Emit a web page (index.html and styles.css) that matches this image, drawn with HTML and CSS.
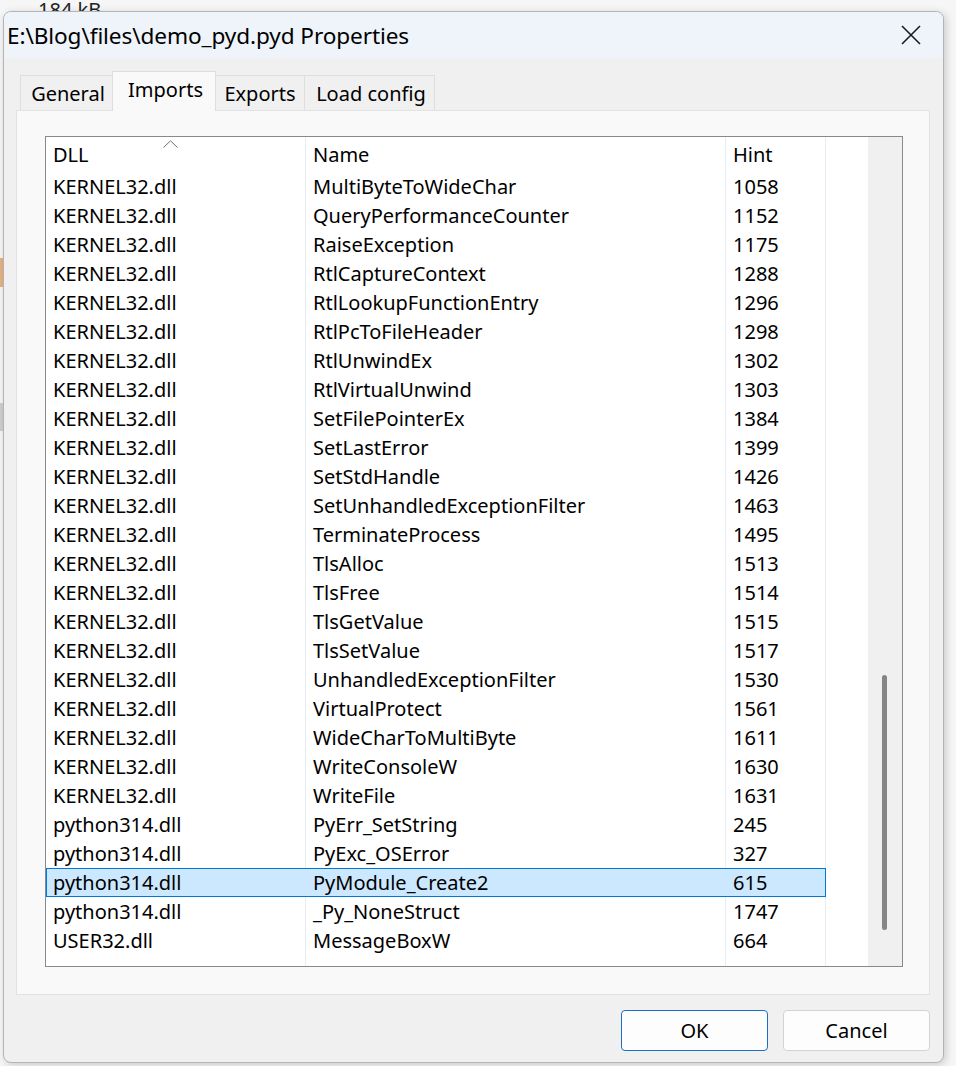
FILE: index.html
```html
<!DOCTYPE html>
<html>
<head>
<meta charset="utf-8">
<link rel="stylesheet" href="styles.css">
</head>
<body>
<div class="desktop">
  <div class="bg-text">184 kB</div>
  <div class="bg-strip orange"></div>
  <div class="bg-strip gray"></div>
  <div class="window">
    <div class="titlebar">
      <span class="title">E:\Blog\files\demo_pyd.pyd Properties</span>
      <svg class="close" width="20" height="20" viewBox="0 0 20 20"><path d="M1 1 L19 19 M19 1 L1 19" stroke="#1b1b1b" stroke-width="1.6" fill="none"/></svg>
    </div>
    <div class="tabs">
      <div class="tab t-general">General</div>
      <div class="tab t-imports active">Imports</div>
      <div class="tab t-exports">Exports</div>
      <div class="tab t-load">Load config</div>
    </div>
    <div class="panel">
      <div class="listview">
        <div class="table">
          <div class="row header">
            <div class="cell">DLL<svg class="sort" width="15" height="8" viewBox="0 0 15 8"><path d="M0.5 7.5 L7.5 0.8 L14.5 7.5" stroke="#707070" stroke-width="1" fill="none"/></svg></div>
            <div class="cell">Name</div>
            <div class="cell">Hint</div>
          </div>
          <div class="row"><div class="cell">KERNEL32.dll</div><div class="cell">MultiByteToWideChar</div><div class="cell">1058</div></div>
          <div class="row"><div class="cell">KERNEL32.dll</div><div class="cell">QueryPerformanceCounter</div><div class="cell">1152</div></div>
          <div class="row"><div class="cell">KERNEL32.dll</div><div class="cell">RaiseException</div><div class="cell">1175</div></div>
          <div class="row"><div class="cell">KERNEL32.dll</div><div class="cell">RtlCaptureContext</div><div class="cell">1288</div></div>
          <div class="row"><div class="cell">KERNEL32.dll</div><div class="cell">RtlLookupFunctionEntry</div><div class="cell">1296</div></div>
          <div class="row"><div class="cell">KERNEL32.dll</div><div class="cell">RtlPcToFileHeader</div><div class="cell">1298</div></div>
          <div class="row"><div class="cell">KERNEL32.dll</div><div class="cell">RtlUnwindEx</div><div class="cell">1302</div></div>
          <div class="row"><div class="cell">KERNEL32.dll</div><div class="cell">RtlVirtualUnwind</div><div class="cell">1303</div></div>
          <div class="row"><div class="cell">KERNEL32.dll</div><div class="cell">SetFilePointerEx</div><div class="cell">1384</div></div>
          <div class="row"><div class="cell">KERNEL32.dll</div><div class="cell">SetLastError</div><div class="cell">1399</div></div>
          <div class="row"><div class="cell">KERNEL32.dll</div><div class="cell">SetStdHandle</div><div class="cell">1426</div></div>
          <div class="row"><div class="cell">KERNEL32.dll</div><div class="cell">SetUnhandledExceptionFilter</div><div class="cell">1463</div></div>
          <div class="row"><div class="cell">KERNEL32.dll</div><div class="cell">TerminateProcess</div><div class="cell">1495</div></div>
          <div class="row"><div class="cell">KERNEL32.dll</div><div class="cell">TlsAlloc</div><div class="cell">1513</div></div>
          <div class="row"><div class="cell">KERNEL32.dll</div><div class="cell">TlsFree</div><div class="cell">1514</div></div>
          <div class="row"><div class="cell">KERNEL32.dll</div><div class="cell">TlsGetValue</div><div class="cell">1515</div></div>
          <div class="row"><div class="cell">KERNEL32.dll</div><div class="cell">TlsSetValue</div><div class="cell">1517</div></div>
          <div class="row"><div class="cell">KERNEL32.dll</div><div class="cell">UnhandledExceptionFilter</div><div class="cell">1530</div></div>
          <div class="row"><div class="cell">KERNEL32.dll</div><div class="cell">VirtualProtect</div><div class="cell">1561</div></div>
          <div class="row"><div class="cell">KERNEL32.dll</div><div class="cell">WideCharToMultiByte</div><div class="cell">1611</div></div>
          <div class="row"><div class="cell">KERNEL32.dll</div><div class="cell">WriteConsoleW</div><div class="cell">1630</div></div>
          <div class="row"><div class="cell">KERNEL32.dll</div><div class="cell">WriteFile</div><div class="cell">1631</div></div>
          <div class="row"><div class="cell">python314.dll</div><div class="cell">PyErr_SetString</div><div class="cell">245</div></div>
          <div class="row"><div class="cell">python314.dll</div><div class="cell">PyExc_OSError</div><div class="cell">327</div></div>
          <div class="row selected"><div class="cell">python314.dll</div><div class="cell">PyModule_Create2</div><div class="cell">615</div></div>
          <div class="row"><div class="cell">python314.dll</div><div class="cell">_Py_NoneStruct</div><div class="cell">1747</div></div>
          <div class="row"><div class="cell">USER32.dll</div><div class="cell">MessageBoxW</div><div class="cell">664</div></div>
        </div>
        <div class="scrollbar"><div class="thumb"></div></div>
      </div>
    </div>
    <div class="buttons">
      <div class="btn default">OK</div>
      <div class="btn">Cancel</div>
    </div>
  </div>
</div>
</body>
</html>
```
FILE: styles.css
```css
* { box-sizing: border-box; }
html, body { margin: 0; padding: 0; }
body {
  background: #f6f6f6;
  font-family: "Noto Sans", "Open Sans", sans-serif;
  color: #000;
  width: 956px;
  height: 1066px;
  overflow: hidden;
}
.desktop {
  position: relative;
  width: 956px;
  height: 1066px;
  padding-top: 11px;
  padding-left: 3px;
}
.bg-text {
  position: absolute;
  left: 38px;
  top: -4px;
  font-size: 20px;
  line-height: 27px;
  color: #222;
}
.bg-strip { position: absolute; left: 0; width: 4px; }
.bg-strip.orange { top: 258px; height: 29px; background: #e7b382; }
.bg-strip.gray { top: 403px; height: 28px; background: #cfcfcf; }

.window {
  position: relative;
  width: 941px;
  height: 1052px;
  background: #f0f0f0;
  border: 1px solid #b4b4b4;
  border-radius: 8px;
  overflow: hidden;
  box-shadow: 2px 2px 8px rgba(0,0,0,0.18);
  display: flex;
  flex-direction: column;
}
.titlebar {
  height: 46px;
  background: #eef4f9;
  display: flex;
  align-items: center;
  justify-content: space-between;
  padding-left: 3px;
  padding-right: 22px;
}
.title { font-size: 22.6px; letter-spacing: -0.1px; }
.close { display: block; }

.tabs {
  margin-top: 13px;
  height: 39px;
  display: flex;
  align-items: flex-end;
  padding-left: 16px;
  position: relative;
  z-index: 1;
}
.tab {
  height: 35px;
  font-size: 20px;
  display: flex;
  align-items: center;
  justify-content: center;
  background: #f0f0f0;
  border: 1px solid #dedede;
  border-bottom: none;
  border-left: none;
  padding-top: 1px;
}
.tab.t-general { width: 93px; border-left: 1px solid #dedede; padding-left: 3px; }
.tab.t-imports { width: 104px; }
.tab.t-exports { width: 89px; }
.tab.t-load { width: 130px; padding-left: 3px; }
.tab.active {
  height: 40px;
  background: #f9f9f9;
  border-left: 1px solid #dedede;
  margin-left: -1px;
  margin-bottom: -1px;
  padding-bottom: 6px;
  padding-left: 3px;
}

.panel {
  margin-left: 12px;
  width: 914px;
  height: 885px;
  background: #f9f9f9;
  border: 1px solid #e2e2e2;
  padding: 25px 26px 27px 28px;
}
.listview {
  height: 831px;
  border: 1px solid #858a90;
  background: #fff;
  display: flex;
}
.table {
  flex: 1;
  display: flex;
  flex-direction: column;
  background-image:
    linear-gradient(#e6edf5, #e6edf5),
    linear-gradient(#e6edf5, #e6edf5),
    linear-gradient(#e6edf5, #e6edf5);
  background-size: 1px 100%, 1px 100%, 1px 100%;
  background-position: 259px 0, 679px 0, 779px 0;
  background-repeat: no-repeat;
}
.row {
  display: grid;
  grid-template-columns: 260px 420px 100px;
  width: 780px;
  height: 29px;
  font-size: 20px;
  line-height: 27px;
  border: 1px solid transparent;
}
.row .cell { padding-left: 6px; white-space: nowrap; position: relative; }
.row.header { height: 35px; line-height: 33px; }
.row.selected {
  background: #cce8ff;
  border-color: #0078d7;
}
.sort {
  position: absolute;
  left: 116px;
  top: 2px;
}
.scrollbar {
  width: 34px;
  background: #f0f0f0;
  position: relative;
}
.thumb {
  position: absolute;
  left: 14px;
  top: 538px;
  width: 5px;
  height: 255px;
  border-radius: 3px;
  background: #858585;
}

.buttons {
  margin-top: 15px;
  display: flex;
  justify-content: flex-end;
  gap: 15px;
  padding-right: 13px;
}
.btn {
  width: 147px;
  height: 41px;
  border: 1px solid #d3d3d3;
  border-radius: 4px;
  background: #fdfdfd;
  font-size: 20px;
  display: flex;
  align-items: center;
  justify-content: center;
}
.btn.default { border-color: #1a6fc4; }
```
